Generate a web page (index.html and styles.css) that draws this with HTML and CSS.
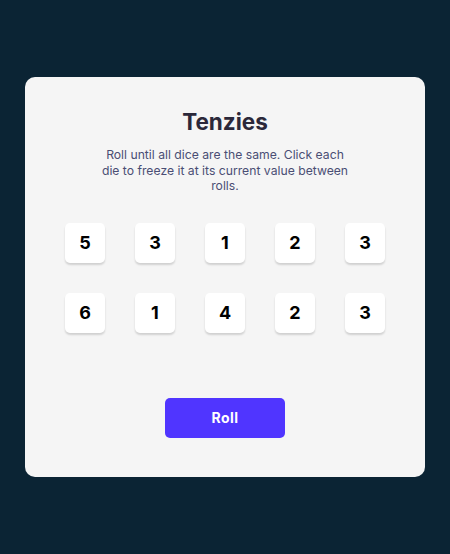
FILE: index.html
```html
<!DOCTYPE html>
<html>
<head>
<meta charset="utf-8">
<link rel="stylesheet" href="styles.css">
</head>
<body>
<main class="card">
  <h1 class="title">Tenzies</h1>
  <p class="instructions">Roll until all dice are the same. Click each die to freeze it at its current value between rolls.</p>
  <div class="dice">
    <button class="die">5</button>
    <button class="die">3</button>
    <button class="die">1</button>
    <button class="die">2</button>
    <button class="die">3</button>
    <button class="die">6</button>
    <button class="die">1</button>
    <button class="die">4</button>
    <button class="die">2</button>
    <button class="die">3</button>
  </div>
  <button class="roll">Roll</button>
</main>
</body>
</html>
```
FILE: styles.css
```css
html, body {
  margin: 0;
  padding: 0;
}
body {
  background: #0b2434;
  height: 100vh;
  display: flex;
  align-items: center;
  justify-content: center;
  font-family: Inter, "Noto Sans", sans-serif;
}
.card {
  box-sizing: border-box;
  width: 400px;
  height: 400px;
  background: #f5f5f5;
  border-radius: 10px;
  padding: 30px 0 0;
  display: flex;
  flex-direction: column;
  align-items: center;
}
.title {
  margin: 0;
  font-size: 22.5px;
  line-height: 30px;
  font-weight: 700;
  color: #2b283a;
}
.instructions {
  margin: 10px 0 0;
  width: 252px;
  text-align: center;
  font-size: 12.2px;
  line-height: 15.5px;
  color: #4a4e74;
}
.dice {
  margin-top: 29px;
  display: grid;
  grid-template-columns: repeat(5, 40px);
  grid-auto-rows: 40px;
  column-gap: 30px;
  row-gap: 30px;
}
.die {
  width: 40px;
  height: 40px;
  border: none;
  padding: 0;
  background: #ffffff;
  border-radius: 5px;
  box-shadow: 0 2px 2px rgba(0, 0, 0, 0.15);
  font-family: Inter, "Noto Sans", sans-serif;
  font-size: 18px;
  font-weight: 700;
  color: #000000;
}
.roll {
  margin-top: 65px;
  width: 120px;
  height: 40px;
  border: none;
  border-radius: 5px;
  background: #5035ff;
  color: #ffffff;
  font-family: Inter, "Noto Sans", sans-serif;
  font-size: 14px;
  font-weight: 700;
  letter-spacing: 0.5px;
}
```
